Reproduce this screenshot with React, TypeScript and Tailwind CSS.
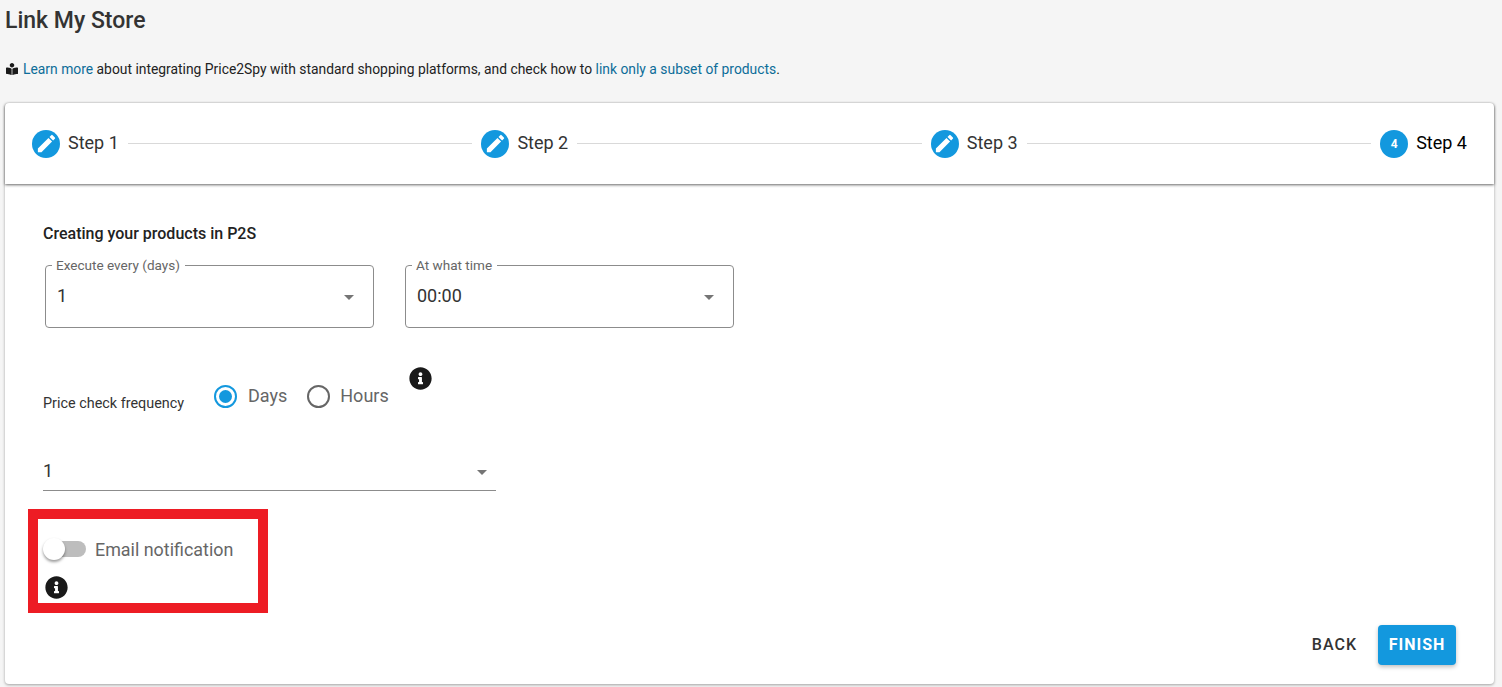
import { FaBookReader, FaInfoCircle } from 'react-icons/fa';
import { MdEdit } from 'react-icons/md';

const blue = 'bg-[#1398de]';

function StepHead({ label, index, active }: { label: string; index?: number; active?: boolean }) {
  return (
    <div className="flex items-center shrink-0">
      <div className={`w-7 h-7 rounded-full ${blue} flex items-center justify-center text-white`}>
        {index ? <span className="text-[12px] font-bold">{index}</span> : <MdEdit size={23} />}
      </div>
      <span className={`ml-2 text-[18px] leading-[24px] -mt-[2px] ${active ? 'text-black' : 'text-[#333]'}`}>{label}</span>
    </div>
  );
}

function Arrow() {
  return <span className="w-0 h-0 mt-[3px] border-x-[5px] border-x-transparent border-t-[5px] border-t-[#757575]" />;
}

function OutlinedSelect({ label, value }: { label: string; value: string }) {
  return (
    <fieldset className="w-[329px] h-[70px] border border-[#8c8c8c] rounded-[4px] pl-[6px] pr-[19px] flex-none">
      <legend className="px-[4px] text-[13.55px] leading-[14px] text-[#666] pr-[5px]">{label}</legend>
      <div className="flex items-center justify-between pl-[5px] mt-[10px]">
        <span className="text-[18px] text-[#333]">{value}</span>
        <Arrow />
      </div>
    </fieldset>
  );
}

export default function App() {
  return (
    <div className="w-[1502px] h-[687px] overflow-hidden bg-[#f5f5f5] font-['Roboto',sans-serif]">
      <div className="pl-[5px] pt-[6px] text-[23px] leading-[30px] font-medium text-[#333]">Link My Store</div>

      <div className="pl-[6px] mt-[21px] flex items-center text-[13.86px] leading-[24px] text-[#222]">
        <FaBookReader size={12} className="text-[#1a1a1a]" />
        <span className="ml-[5px]">
          <a className="text-[#0d6d99]">Learn more</a> about integrating Price2Spy with standard shopping platforms, and check how to{' '}
          <a className="text-[#0d6d99]">link only a subset of products</a>.
        </span>
      </div>

      <div className="ml-[5px] mt-[22px] w-[1489px] h-[581px] bg-white rounded-[4px] shadow-[0_1px_3px_rgba(0,0,0,0.35)] flex flex-col">
        {/* Stepper */}
        <div className="h-[81px] flex-none flex items-center pl-[27px] pr-[27px] rounded-t-[4px] shadow-[0_1px_3px_rgba(0,0,0,0.6)]">
          <StepHead label="Step 1" />
          <div className="flex-1 h-px bg-[#d9d9d9] mx-[9px]" />
          <StepHead label="Step 2" />
          <div className="flex-1 h-px bg-[#d9d9d9] mx-[9px]" />
          <StepHead label="Step 3" />
          <div className="flex-1 h-px bg-[#d9d9d9] mx-[9px]" />
          <StepHead label="Step 4" index={4} active />
        </div>

        {/* Form */}
        <div className="relative flex-1 pl-[38px] pt-[39px]">
          <div className="text-[16px] leading-[22px] font-medium text-[#222]">Creating your products in P2S</div>

          <div className="flex gap-[31px] ml-[2px] mt-[13px]">
            <OutlinedSelect label="Execute every (days)" value="1" />
            <OutlinedSelect label="At what time" value="00:00" />
          </div>

          <div className="flex items-start mt-[39px] h-[62px]">
            <span className="text-[14.4px] leading-[18px] text-[#333] mt-[28px] w-[171px]">Price check frequency</span>
            <div className="flex items-center mt-[17px]">
              <span className="w-[23px] h-[23px] rounded-full border-2 border-[#1398de] flex items-center justify-center">
                <span className={`w-[13px] h-[13px] rounded-full ${blue}`} />
              </span>
              <span className="ml-[11px] text-[18px] text-[#666] -mt-[2px]">Days</span>
              <span className="ml-[20px] w-[23px] h-[23px] rounded-full border-2 border-[#666]" />
              <span className="ml-[10px] text-[18px] text-[#666] -mt-[2px]">Hours</span>
            </div>
            <FaInfoCircle size={23} className="ml-[20px] text-[#1a1a1a]" />
          </div>

          <div className="w-[453px] h-[44px] mt-[18px] border-b border-[#8c8c8c] flex items-center justify-between pr-[9px] pt-[4px]">
            <span className="text-[18px] text-[#333]">1</span>
            <Arrow />
          </div>

          {/* Annotation box from the original screenshot */}
          <div className="-ml-[15px] mt-[18px] w-[240px] h-[104px] border-[10px] border-[#ed1c24] pl-[5px]">
            <div className="flex items-center mt-[11px] h-[38px]">
              <div className="relative w-[43px] h-[16px] flex-none">
                <div className="absolute left-[3px] right-0 top-0 bottom-0 rounded-full bg-[#bdbdbd]" />
                <div className="absolute left-0 top-[-3px] w-[22px] h-[22px] rounded-full bg-white shadow-[0_2px_3px_rgba(0,0,0,0.4)]" />
              </div>
              <span className="ml-[9px] text-[17.9px] text-[#666] mt-[2px]">Email notification</span>
            </div>
            <FaInfoCircle size={23} className="mt-[8px] ml-[2px] text-[#1a1a1a]" />
          </div>

          <div className="absolute right-[38px] bottom-[19px] flex items-center">
            <span className="text-[16px] font-medium tracking-[1px] text-[#333] mr-[21px]">BACK</span>
            <button className={`w-[78px] h-[40px] rounded-[4px] ${blue} text-white text-[16px] font-bold tracking-[1px] shadow-[0_2px_4px_rgba(0,0,0,0.25)]`}>
              FINISH
            </button>
          </div>
        </div>
      </div>
    </div>
  );
}
